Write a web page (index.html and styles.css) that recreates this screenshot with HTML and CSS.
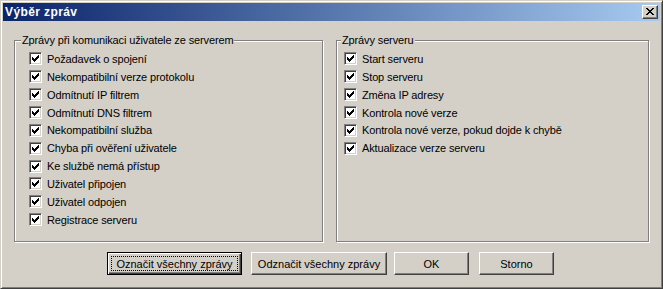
FILE: index.html
```html
<!DOCTYPE html>
<html lang="cs">
<head>
    <meta charset="UTF-8">
    <title>Výběr zpráv</title>
    <link rel="stylesheet" href="styles.css">
</head>
<body>
    <div class="window">
        <div class="titlebar">
            <span class="title">Výběr zpráv</span>
            <button class="close" type="button">
                <svg width="8" height="7" viewBox="0 0 8 7" shape-rendering="crispEdges">
                    <path d="M0 0h2v1h-2z M6 0h2v1h-2z M1 1h2v1h-2z M5 1h2v1h-2z M2 2h4v1h-4z M3 3h2v1h-2z M2 4h4v1h-4z M1 5h2v1h-2z M5 5h2v1h-2z M0 6h2v1h-2z M6 6h2v1h-2z" fill="#000"/>
                </svg>
            </button>
        </div>

        <div class="client">
            <div class="groups">
                <fieldset class="group group-left">
                    <legend>Zprávy při komunikaci uživatele ze serverem</legend>
                    <ul class="checks">
                        <li><span class="box"><svg class="tick" viewBox="0 0 7 7"><path d="M6 0h1v1h-1z M5 1h2v1h-2z M0 2h1v1h-1z M4 2h3v1h-3z M0 3h2v1h-2z M3 3h3v1h-3z M0 4h5v1h-5z M1 5h3v1h-3z M2 6h1v1h-1z"/></svg></span>Požadavek o spojení</li>
                        <li><span class="box"><svg class="tick" viewBox="0 0 7 7"><path d="M6 0h1v1h-1z M5 1h2v1h-2z M0 2h1v1h-1z M4 2h3v1h-3z M0 3h2v1h-2z M3 3h3v1h-3z M0 4h5v1h-5z M1 5h3v1h-3z M2 6h1v1h-1z"/></svg></span>Nekompatibilní verze protokolu</li>
                        <li><span class="box"><svg class="tick" viewBox="0 0 7 7"><path d="M6 0h1v1h-1z M5 1h2v1h-2z M0 2h1v1h-1z M4 2h3v1h-3z M0 3h2v1h-2z M3 3h3v1h-3z M0 4h5v1h-5z M1 5h3v1h-3z M2 6h1v1h-1z"/></svg></span>Odmítnutí IP filtrem</li>
                        <li><span class="box"><svg class="tick" viewBox="0 0 7 7"><path d="M6 0h1v1h-1z M5 1h2v1h-2z M0 2h1v1h-1z M4 2h3v1h-3z M0 3h2v1h-2z M3 3h3v1h-3z M0 4h5v1h-5z M1 5h3v1h-3z M2 6h1v1h-1z"/></svg></span>Odmítnutí DNS filtrem</li>
                        <li><span class="box"><svg class="tick" viewBox="0 0 7 7"><path d="M6 0h1v1h-1z M5 1h2v1h-2z M0 2h1v1h-1z M4 2h3v1h-3z M0 3h2v1h-2z M3 3h3v1h-3z M0 4h5v1h-5z M1 5h3v1h-3z M2 6h1v1h-1z"/></svg></span>Nekompatibilní služba</li>
                        <li><span class="box"><svg class="tick" viewBox="0 0 7 7"><path d="M6 0h1v1h-1z M5 1h2v1h-2z M0 2h1v1h-1z M4 2h3v1h-3z M0 3h2v1h-2z M3 3h3v1h-3z M0 4h5v1h-5z M1 5h3v1h-3z M2 6h1v1h-1z"/></svg></span>Chyba při ověření uživatele</li>
                        <li><span class="box"><svg class="tick" viewBox="0 0 7 7"><path d="M6 0h1v1h-1z M5 1h2v1h-2z M0 2h1v1h-1z M4 2h3v1h-3z M0 3h2v1h-2z M3 3h3v1h-3z M0 4h5v1h-5z M1 5h3v1h-3z M2 6h1v1h-1z"/></svg></span>Ke službě nemá přístup</li>
                        <li><span class="box"><svg class="tick" viewBox="0 0 7 7"><path d="M6 0h1v1h-1z M5 1h2v1h-2z M0 2h1v1h-1z M4 2h3v1h-3z M0 3h2v1h-2z M3 3h3v1h-3z M0 4h5v1h-5z M1 5h3v1h-3z M2 6h1v1h-1z"/></svg></span>Uživatel připojen</li>
                        <li><span class="box"><svg class="tick" viewBox="0 0 7 7"><path d="M6 0h1v1h-1z M5 1h2v1h-2z M0 2h1v1h-1z M4 2h3v1h-3z M0 3h2v1h-2z M3 3h3v1h-3z M0 4h5v1h-5z M1 5h3v1h-3z M2 6h1v1h-1z"/></svg></span>Uživatel odpojen</li>
                        <li><span class="box"><svg class="tick" viewBox="0 0 7 7"><path d="M6 0h1v1h-1z M5 1h2v1h-2z M0 2h1v1h-1z M4 2h3v1h-3z M0 3h2v1h-2z M3 3h3v1h-3z M0 4h5v1h-5z M1 5h3v1h-3z M2 6h1v1h-1z"/></svg></span>Registrace serveru</li>
                    </ul>
                </fieldset>

                <fieldset class="group group-right">
                    <legend>Zprávy serveru</legend>
                    <ul class="checks">
                        <li><span class="box"><svg class="tick" viewBox="0 0 7 7"><path d="M6 0h1v1h-1z M5 1h2v1h-2z M0 2h1v1h-1z M4 2h3v1h-3z M0 3h2v1h-2z M3 3h3v1h-3z M0 4h5v1h-5z M1 5h3v1h-3z M2 6h1v1h-1z"/></svg></span>Start serveru</li>
                        <li><span class="box"><svg class="tick" viewBox="0 0 7 7"><path d="M6 0h1v1h-1z M5 1h2v1h-2z M0 2h1v1h-1z M4 2h3v1h-3z M0 3h2v1h-2z M3 3h3v1h-3z M0 4h5v1h-5z M1 5h3v1h-3z M2 6h1v1h-1z"/></svg></span>Stop serveru</li>
                        <li><span class="box"><svg class="tick" viewBox="0 0 7 7"><path d="M6 0h1v1h-1z M5 1h2v1h-2z M0 2h1v1h-1z M4 2h3v1h-3z M0 3h2v1h-2z M3 3h3v1h-3z M0 4h5v1h-5z M1 5h3v1h-3z M2 6h1v1h-1z"/></svg></span>Změna IP adresy</li>
                        <li><span class="box"><svg class="tick" viewBox="0 0 7 7"><path d="M6 0h1v1h-1z M5 1h2v1h-2z M0 2h1v1h-1z M4 2h3v1h-3z M0 3h2v1h-2z M3 3h3v1h-3z M0 4h5v1h-5z M1 5h3v1h-3z M2 6h1v1h-1z"/></svg></span>Kontrola nové verze</li>
                        <li><span class="box"><svg class="tick" viewBox="0 0 7 7"><path d="M6 0h1v1h-1z M5 1h2v1h-2z M0 2h1v1h-1z M4 2h3v1h-3z M0 3h2v1h-2z M3 3h3v1h-3z M0 4h5v1h-5z M1 5h3v1h-3z M2 6h1v1h-1z"/></svg></span>Kontrola nové verze, pokud dojde k chybě</li>
                        <li><span class="box"><svg class="tick" viewBox="0 0 7 7"><path d="M6 0h1v1h-1z M5 1h2v1h-2z M0 2h1v1h-1z M4 2h3v1h-3z M0 3h2v1h-2z M3 3h3v1h-3z M0 4h5v1h-5z M1 5h3v1h-3z M2 6h1v1h-1z"/></svg></span>Aktualizace verze serveru</li>
                    </ul>
                </fieldset>
            </div>

            <div class="buttons">
                <button class="btn btn-default btn-wide" type="button"><span class="focus">Označit všechny zprávy</span></button>
                <button class="btn btn-wide btn-second" type="button">Odznačit všechny zprávy</button>
                <button class="btn btn-ok" type="button">OK</button>
                <button class="btn btn-cancel" type="button">Storno</button>
            </div>
        </div>
    </div>
</body>
</html>
```

FILE: styles.css
```css
* {
    box-sizing: border-box;
}
body {
    margin: 0;
    font-family: "Liberation Sans", Arial, sans-serif;
    font-size: 11px;
    letter-spacing: -0.13px;
    color: #000;
    background: #d4d0c8;
}
.window {
    width: 663px;
    height: 289px;
    display: flex;
    flex-direction: column;
    padding: 2px;
    background: #d4d0c8;
    border: 1px solid;
    border-color: #d4d0c8 #404040 #404040 #d4d0c8;
    box-shadow: inset 1px 1px #fff, inset -1px -1px #808080;
}
.titlebar {
    height: 18px;
    margin-bottom: 1px;
    display: flex;
    align-items: center;
    justify-content: space-between;
    padding: 0 2px;
    background: linear-gradient(to right, #0a246a, #a6caf0);
}
.title {
    color: #fff;
    font-size: 12px;
    font-weight: bold;
    letter-spacing: 0.4px;
    line-height: 18px;
}
.close {
    width: 16px;
    height: 14px;
    padding: 2px 0 0 3px;
    margin: 0;
    display: flex;
    align-items: flex-start;
    background: #d4d0c8;
    border: 1px solid;
    border-color: #fff #404040 #404040 #fff;
    box-shadow: inset -1px -1px #808080;
}
.close svg {
    display: block;
}
.client {
    flex: 1;
    display: flex;
    flex-direction: column;
    padding: 12px 11px 11px 11px;
}
.groups {
    display: flex;
    gap: 13px;
    height: 208px;
}
.group {
    margin: 0;
    padding: 0;
    border: 1px solid #808080;
    box-shadow: 1px 1px #fff, inset 1px 1px #fff;
    min-width: 0;
}
.group-left {
    width: 309px;
}
.group-right {
    width: 313px;
}
.group legend {
    padding: 0 1px;
    line-height: 13px;
    background: #d4d0c8;
}
.group-left legend {
    margin-left: 6px;
}
.group-right legend {
    margin-left: 4px;
}
.checks {
    list-style: none;
    margin: 0;
    padding: 3px 0 0 14px;
}
.group-right .checks {
    padding-left: 7px;
}
.checks li {
    height: 17.86px;
    display: flex;
    align-items: center;
    white-space: nowrap;
}
.box {
    width: 13px;
    height: 13px;
    flex: none;
    margin-right: 5px;
    padding: 2px;
    background: #fff;
    border: 1px solid;
    border-color: #808080 #fff #fff #808080;
    box-shadow: inset 1px 1px #404040, inset -1px -1px #d4d0c8;
}
.tick {
    display: block;
    width: 7px;
    height: 7px;
    shape-rendering: crispEdges;
    fill: #000;
}
.buttons {
    display: flex;
    margin-top: 10px;
    padding-left: 93px;
}
.btn {
    height: 23px;
    width: 75px;
    margin: 0;
    padding: 0;
    font: inherit;
    color: #000;
    background: #d4d0c8;
    border: 1px solid;
    border-color: #fff #404040 #404040 #fff;
    box-shadow: inset -1px -1px #808080;
}
.btn-wide {
    width: 135px;
}
.btn-default {
    border: 1px solid #000;
    box-shadow: inset 1px 1px #fff, inset -1px -1px #404040, inset -2px -2px #808080;
    padding: 3px;
}
.focus {
    display: flex;
    align-items: center;
    justify-content: center;
    height: 100%;
    border: 1px dotted #000;
}
.btn-second {
    width: 136px;
    margin-left: 9px;
}
.btn-ok {
    margin-left: 7px;
}
.btn-cancel {
    margin-left: 10px;
}
```
